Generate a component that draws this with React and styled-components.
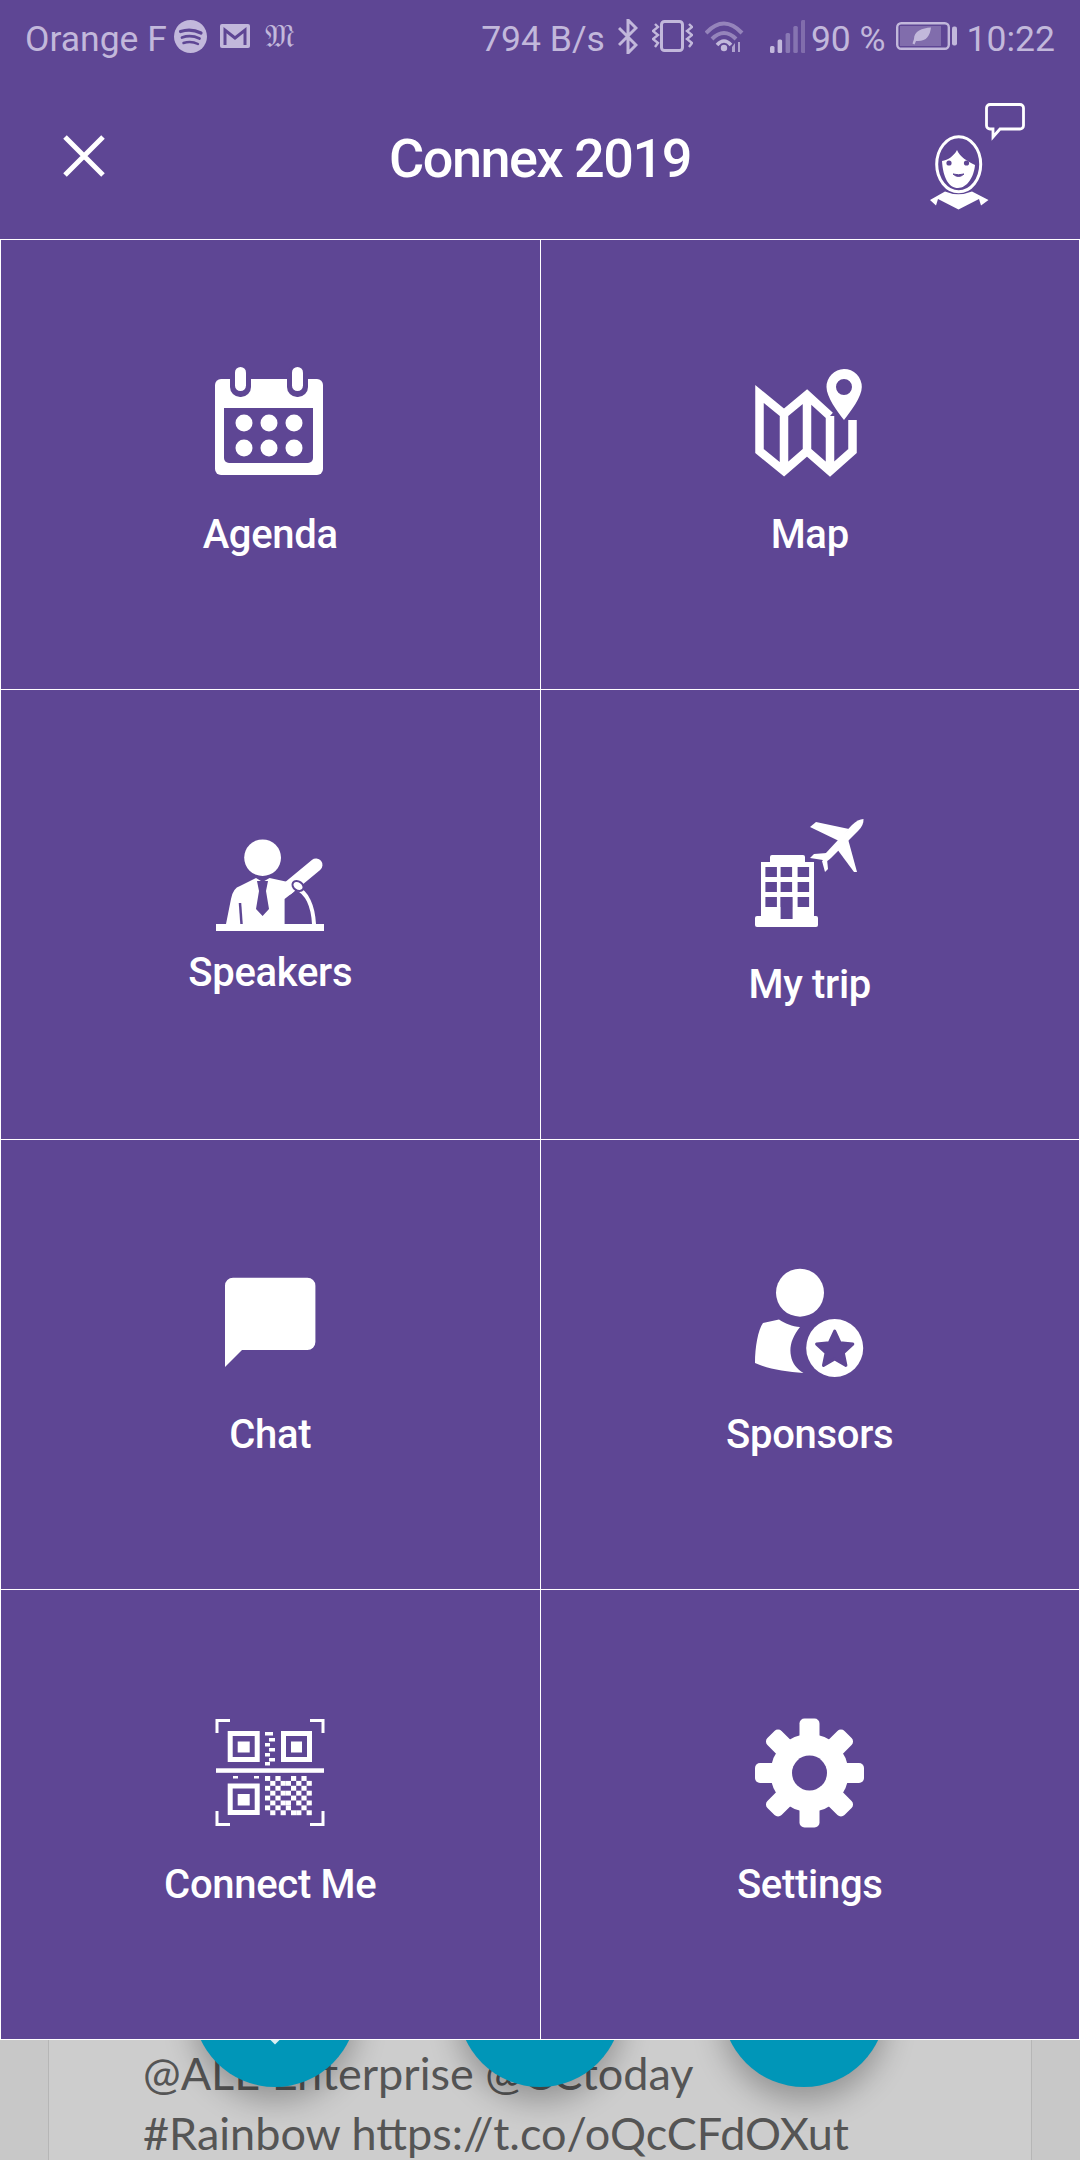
import React from 'react';
import styled, { createGlobalStyle } from 'styled-components';

const PURPLE = '#5e4694';
const DIM = '#c2b8db';

const Global = createGlobalStyle`
    html, body {
        margin: 0;
        padding: 0;
        background: ${PURPLE};
    }
    * {
        box-sizing: border-box;
    }
`;

const Page = styled.div`
    width: 1080px;
    height: 2160px;
    display: flex;
    flex-direction: column;
    overflow: hidden;
    background: ${PURPLE};
    font-family: Roboto, "Liberation Sans", sans-serif;
`;

const StatusBar = styled.div`
    height: 72px;
    padding: 0 25px;
    display: flex;
    align-items: center;
    justify-content: space-between;
    color: ${DIM};
    font-size: 35.5px;
    line-height: 66px;
`;

const StatusGroup = styled.div`
    display: flex;
    align-items: center;
`;

const StatusText = styled.span`
    margin-left: ${(p) => p.$ml || 0}px;
    padding-top: 6px;
    white-space: nowrap;
`;

const StatusSvg = styled.svg`
    display: block;
    flex: none;
    margin-left: ${(p) => p.$ml || 0}px;
    color: ${DIM};
`;

const Blackletter = styled.span`
    margin-left: 15px;
    width: 30px;
    font-family: "DejaVu Serif", "DejaVu Sans", serif;
    font-size: 32px;
    line-height: 36px;
`;

const Toolbar = styled.div`
    height: 167px;
    padding: 0 63px;
    display: grid;
    grid-template-columns: 1fr auto 1fr;
    align-items: center;
`;

const Title = styled.h1`
    margin: 7px 0 0;
    color: #fff;
    font-size: 54px;
    font-weight: 500;
    letter-spacing: -1.5px;
    line-height: 60px;
`;

const CloseSvg = styled.svg`
    display: block;
`;

const AvatarSvg = styled.svg`
    display: block;
    justify-self: end;
    margin-right: -13px;
`;

const Grid = styled.div`
    display: grid;
    grid-template-columns: 1fr 1fr;
    grid-auto-rows: 450px;
    border-top: 1px solid #fff;
    border-left: 1px solid #fff;
`;

const Cell = styled.div`
    display: flex;
    flex-direction: column;
    align-items: center;
    justify-content: center;
    border-right: 1px solid #fff;
    border-bottom: 1px solid #fff;
    background: ${PURPLE};
`;

const IconBox = styled.div`
    width: 110px;
    height: ${(p) => p.$height || 110}px;
`;

const IconSvg = styled.svg`
    display: block;
    overflow: visible;
`;

const Label = styled.div`
    margin: 34px 0 4px;
    color: #fff;
    font-size: 40px;
    font-weight: 500;
    letter-spacing: -0.3px;
    line-height: 48px;
    white-space: nowrap;
`;

const Behind = styled.div`
    position: relative;
    flex: 1;
    overflow: hidden;
    background: #c8c8c8;
`;

const Card = styled.div`
    height: 100%;
    margin: 0 48px;
    padding: 3px 0 0 94px;
    background: #cdcdcd;
    border-left: 1px solid #b6b6b6;
    border-right: 1px solid #b6b6b6;
    color: #555;
    font-family: Lato, "Open Sans", sans-serif;
    font-size: 45px;
    line-height: 60px;
`;

const Fab = styled.div`
    position: absolute;
    top: -117px;
    left: ${(p) => p.$left}px;
    width: 164px;
    height: 164px;
    border-radius: 50%;
    background: #0096b8;
    box-shadow: 0 14px 30px rgba(0, 0, 0, 0.28);
`;

const FabTick = styled.div`
    position: absolute;
    left: 76px;
    top: 107px;
    width: 12px;
    height: 12px;
    background: #d9eef3;
    transform: rotate(45deg);
`;

function Spotify() {
    return (
        <StatusSvg $ml={7} width="33" height="33" viewBox="0 0 33 33" fill="none">
            <circle cx="16.5" cy="16.5" r="16.5" fill="currentColor" />
            <g stroke={PURPLE} strokeLinecap="round">
                <path d="M6.5 11.5Q17 8 27 13" strokeWidth="3.2" />
                <path d="M8 17.5Q17 14.5 25.5 18.5" strokeWidth="2.8" />
                <path d="M9.5 23Q17 20.5 24 24" strokeWidth="2.4" />
            </g>
        </StatusSvg>
    );
}

function Mail() {
    return (
        <StatusSvg $ml={13} width="30" height="24" viewBox="0 0 30 24" fill="none">
            <rect width="30" height="24" rx="2" fill="currentColor" />
            <path d="M5 21V6l10 8 10-8v15" stroke={PURPLE} strokeWidth="3" />
        </StatusSvg>
    );
}

function Bluetooth() {
    return (
        <StatusSvg $ml={13} width="20" height="35" viewBox="0 0 20 35" fill="none">
            <path d="M1 9l17 17-8 8V1l8 8L1 26" stroke="currentColor" strokeWidth="3" />
        </StatusSvg>
    );
}

function Vibrate() {
    return (
        <StatusSvg $ml={14} width="41" height="32" viewBox="0 0 41 32" fill="none">
            <rect x="9.5" y="1.5" width="21" height="29" rx="3" stroke="currentColor" strokeWidth="3" />
            <path d="M3 4l3 3-5 4 5 4-5 4 5 4-3 4" stroke="currentColor" strokeWidth="2.4" />
            <path d="M37 4l3 3-5 4 5 4-5 4 5 4-3 4" stroke="currentColor" strokeWidth="2.4" />
        </StatusSvg>
    );
}

function Wifi() {
    return (
        <StatusSvg $ml={12} width="39" height="32" viewBox="0 0 39 32" fill="none">
            <path d="M1 13Q19 -6 37 13" stroke="currentColor" strokeOpacity="0.55" strokeWidth="4" />
            <path d="M7 19Q19 7 31 19" stroke="currentColor" strokeOpacity="0.55" strokeWidth="4" />
            <path d="M12 25Q19 17 26 25" stroke="currentColor" strokeWidth="3.5" />
            <circle cx="19" cy="28" r="3.2" fill="currentColor" />
            <path d="M27 32V27l3-4v9zM33 22h2v10h-2zM38 27h-6" fill="currentColor" fillOpacity="0.8" />
        </StatusSvg>
    );
}

function Signal() {
    const bars = [
        { x: 0, h: 7, o: 1 },
        { x: 7.6, h: 13.5, o: 1 },
        { x: 15.6, h: 20, o: 0.45 },
        { x: 23.3, h: 27, o: 0.4 },
        { x: 31, h: 33, o: 0.35 },
    ];
    return (
        <StatusSvg $ml={26} width="35" height="33" viewBox="0 0 35 33">
            {bars.map((b) => (
                <rect key={b.x} x={b.x} y={33 - b.h} width="4.5" height={b.h} rx="1.5" fill="currentColor" fillOpacity={b.o} />
            ))}
        </StatusSvg>
    );
}

function Battery() {
    return (
        <StatusSvg $ml={10} width="61" height="28" viewBox="0 0 61 28" fill="none">
            <rect x="1.2" y="1.2" width="51.6" height="25.6" rx="4" stroke="currentColor" strokeWidth="2.4" />
            <rect x="4" y="4" width="41" height="20" fill="currentColor" fillOpacity="0.35" />
            <rect x="56" y="4.5" width="5" height="19" rx="2" fill="currentColor" />
            <path d="M35 5.5C26 6 18 9 18 17l-1.5 4.5 2 1 1.5-3.5C30 20 34 14 35 5.5z" fill="currentColor" />
        </StatusSvg>
    );
}

function Close() {
    return (
        <CloseSvg width="42" height="42" viewBox="0 0 42 42" fill="none">
            <path d="M2 2l38 38M40 2L2 40" stroke="#fff" strokeWidth="5" />
        </CloseSvg>
    );
}

function Avatar() {
    return (
        <AvatarSvg width="105" height="110" viewBox="0 0 105 110" fill="none">
            <path
                d="M65 3.5h30a3.5 3.5 0 0 1 3.5 3.5v17.5a3.5 3.5 0 0 1-3.5 3.5H75l-7 8v-8h-3a3.5 3.5 0 0 1-3.5-3.5V7A3.5 3.5 0 0 1 65 3.5z"
                stroke="#fff"
                strokeWidth="2.8"
            />
            <ellipse cx="33.7" cy="63.3" rx="22" ry="27.5" stroke="#fff" strokeWidth="3" />
            <path d="M17 60c6-1 12-5 15-11 3 7 10 11 18 15-1 12-8 23-17 23-9 0-15-10-16-27z" fill="#fff" />
            <circle cx="24" cy="62" r="2.6" fill={PURPLE} />
            <circle cx="41.5" cy="62" r="2.6" fill={PURPLE} />
            <path d="M28 73q5.5 5 11 0q-5.5 1.5-11 0z" fill={PURPLE} stroke={PURPLE} />
            <path d="M5 99L20 90.500Q33 96 47 90.500L63.500 99 56 104.500 54 98 33.500 108.500 13 98 11 104.500z" fill="#fff" />
        </AvatarSvg>
    );
}

function CalendarIcon() {
    return (
        <IconSvg width="110" height="110" viewBox="0 0 110 110" fill="#fff">
            <rect y="12" width="108" height="96" rx="6" />
            <path d="M9 41h89v50a5 5 0 0 1-5 5H14a5 5 0 0 1-5-5z" fill={PURPLE} />
            <rect x="15" y="-2" width="21" height="32" rx="10" fill={PURPLE} />
            <rect x="72" y="-2" width="21" height="32" rx="10" fill={PURPLE} />
            <rect x="20" width="11" height="24" rx="5.5" />
            <rect x="77" width="11" height="24" rx="5.5" />
            {[56, 81].map((cy) =>
                [29, 54, 79].map((cx) => <circle key={`${cx}-${cy}`} cx={cx} cy={cy} r="8.500" />)
            )}
        </IconSvg>
    );
}

function MapIcon() {
    return (
        <IconSvg width="110" height="110" viewBox="0 0 110 110" fill="none">
            <path
                d="M75 49L52 28 29 47 4.500 27V84L29 104 52 84 75 104 97.500 84V53M29 47v57M52 28v56M75 49v55"
                stroke="#fff"
                strokeWidth="8.500"
            />
            <path
                fillRule="evenodd"
                clipRule="evenodd"
                d="M89 2a17.800 17.800 0 0 1 17.800 18c0 10-11 24-17.800 33C82 44 71.500 30 71.500 20A17.800 17.800 0 0 1 89 2zm0 10a8 8 0 1 0 0 16 8 8 0 0 0 0-16z"
                fill="#fff"
            />
        </IconSvg>
    );
}

function SpeakerIcon() {
    return (
        <IconSvg width="110" height="86" viewBox="0 0 110 86" fill="#fff">
            <ellipse cx="47.600" cy="28.700" rx="18.400" ry="18.300" />
            <path d="M11 95l5-25q2-11 9-13l16-8 6.600 4 7-4 18.400 4 8 8-11.400 9v25z" />
            <path d="M72 60L101 36" stroke="#fff" strokeWidth="13" strokeLinecap="round" />
            <path d="M42 52h11l-2 10 3 18-6.400 7L41 80l3-18z" fill={PURPLE} />
            <path d="M25 74l1.500 21" stroke={PURPLE} strokeWidth="2.500" />
            <path d="M81 59c11 4 17 18 18 36" stroke={PURPLE} strokeWidth="9" fill="none" />
            <path d="M81 59c11 4 17 18 18 36" stroke="#fff" strokeWidth="4" fill="none" />
            <ellipse cx="83" cy="57" rx="6" ry="4.500" transform="rotate(35 83 57)" stroke={PURPLE} strokeWidth="2" />
            <rect x="1" y="95" width="108" height="7" />
        </IconSvg>
    );
}

function TripIcon() {
    const cols = [10.4, 25.6, 42.6];
    const rows = [50, 65, 80];
    return (
        <IconSvg width="110" height="110" viewBox="0 0 110 110" fill="#fff">
            <rect y="99" width="63" height="11" rx="2" />
            <rect x="6" y="45" width="53" height="56" />
            <rect x="15" y="38" width="35" height="9" rx="2" />
            {rows.map((y) =>
                cols.map((x) => <rect key={`${x}-${y}`} x={x} y={y} width="11.500" height="10" fill={PURPLE} />)
            )}
            <rect x="25.600" y="80" width="12" height="22" fill={PURPLE} />
            <path d="M108.500 2Q103 2 97 8L70 37Q66 42 68 44Q71 46 76 41L103 14Q109 8 108.500 2z" />
            <path d="M94 12L61 5 55 10 84 24z" />
            <path d="M93 22L102 55 99 55 82 32z" />
            <path d="M72 36L59 37 55 41 68 43z" />
            <path d="M72 42L73 52 70 55 67 44z" />
        </IconSvg>
    );
}

function ChatIcon() {
    return (
        <IconSvg width="110" height="110" viewBox="0 0 110 110" fill="#fff">
            <path d="M18 10.700h74.400a8 8 0 0 1 8 8V75a8 8 0 0 1-8 8H27L10 100V18.700a8 8 0 0 1 8-8z" />
        </IconSvg>
    );
}

function SponsorIcon() {
    return (
        <IconSvg width="110" height="110" viewBox="0 0 110 110" fill="#fff">
            <circle cx="45" cy="25.700" r="24" />
            <path d="M0 96C0 80 3 63 8 56l16-3.500c6 4 13 7 21 7.500-8 10-11 20-9 29 1 7 6 13 12.500 17-18-1-36-4-48.500-10z" />
            <ellipse cx="79.700" cy="81" rx="28.500" ry="29" />
            <path
                d="M79.700 64L85 75.700 97.800 77.100 88.300 85.800 90.900 98.400 79.700 92 68.500 98.400 71.100 85.800 61.600 77.100 74.400 75.700z"
                fill={PURPLE}
                stroke={PURPLE}
                strokeWidth="3"
                strokeLinejoin="round"
            />
        </IconSvg>
    );
}

// bit rows of the qr patch, 5px a cell
const QR_ROWS = [
    '101001010',
    '010110101',
    '101001010',
    '010110101',
    '101001010',
    '010110101',
    '101010010',
    '010101101',
];
const QR_SPINE = [
    [50, 15, 8],
    [54, 21, 6],
    [50, 26, 5],
    [54, 31, 6],
    [50, 36, 5],
    [54, 41, 6],
    [50, 45, 5],
];

function QrFinder({ x, y, w, h }) {
    return (
        <g>
            <rect x={x + 2.5} y={y + 2.5} width={w - 5} height={h - 5} fill="none" stroke="#fff" strokeWidth="5" />
            <rect x={x + 10} y={y + 10.500} width={w - 20} height={h - 20} />
        </g>
    );
}

function QrIcon() {
    return (
        <IconSvg width="110" height="110" viewBox="0 0 110 110" fill="#fff">
            <path
                d="M2 16V3.500H15M95 3.500H108V16M2 94V107.500H15M95 107.500H108V94"
                fill="none"
                stroke="#fff"
                strokeWidth="3"
            />
            <rect x="1" y="51.300" width="108" height="4.500" />
            <QrFinder x={12.700} y={14} w={32} h={31} />
            <QrFinder x={66} y={14} w={31} h={31} />
            <QrFinder x={12.700} y={66.500} w={32} h={31.500} />
            {QR_SPINE.map(([x, y, w]) => (
                <rect key={y} x={x} y={y} width={w} height="3.500" />
            ))}
            <rect x="18" y="59" width="5" height="2.500" />
            <rect x="39" y="59" width="5" height="2.500" />
            {QR_ROWS.map((row, r) =>
                row.split('').map((bit, c) =>
                    bit === '1' ? <rect key={`${r}-${c}`} x={50 + c * 5.200} y={59 + r * 4.900} width="5.200" height="4.900" /> : null
                )
            )}
        </IconSvg>
    );
}

function GearIcon() {
    const angles = [0, 45, 90, 135, 180, 225, 270, 315];
    return (
        <IconSvg width="110" height="110" viewBox="0 0 110 110" fill="#fff">
            {angles.map((a) => (
                <rect key={a} x="44.500" y="1.500" width="20" height="30" rx="5" transform={`rotate(${a} 54.500 56)`} />
            ))}
            <circle cx="54.500" cy="56" r="39" />
            <circle cx="54.500" cy="56" r="17.500" fill={PURPLE} />
        </IconSvg>
    );
}

const items = [
    { label: 'Agenda', Icon: CalendarIcon },
    { label: 'Map', Icon: MapIcon },
    { label: 'Speakers', Icon: SpeakerIcon, height: 86 },
    { label: 'My trip', Icon: TripIcon },
    { label: 'Chat', Icon: ChatIcon },
    { label: 'Sponsors', Icon: SponsorIcon },
    { label: 'Connect Me', Icon: QrIcon },
    { label: 'Settings', Icon: GearIcon },
];

export default function App() {
    return (
        <Page>
            <Global />
            <StatusBar>
                <StatusGroup>
                    <StatusText>Orange F</StatusText>
                    <Spotify />
                    <Mail />
                    <Blackletter>𝔐</Blackletter>
                </StatusGroup>
                <StatusGroup>
                    <StatusText>794 B/s</StatusText>
                    <Bluetooth />
                    <Vibrate />
                    <Wifi />
                    <Signal />
                    <StatusText $ml={6}>90 %</StatusText>
                    <Battery />
                    <StatusText $ml={10}>10:22</StatusText>
                </StatusGroup>
            </StatusBar>
            <Toolbar>
                <Close />
                <Title>Connex 2019</Title>
                <Avatar />
            </Toolbar>
            <Grid>
                {items.map(({ label, Icon, height }) => (
                    <Cell key={label}>
                        <IconBox $height={height}>
                            <Icon />
                        </IconBox>
                        <Label>{label}</Label>
                    </Cell>
                ))}
            </Grid>
            <Behind>
                <Card>
                    @ALE Enterprise @CCtoday
                    <br />
                    #Rainbow https://t.co/oQcCFdOXut
                </Card>
                <Fab $left={193}>
                    <FabTick />
                </Fab>
                <Fab $left={458} />
                <Fab $left={722} />
            </Behind>
        </Page>
    );
}
